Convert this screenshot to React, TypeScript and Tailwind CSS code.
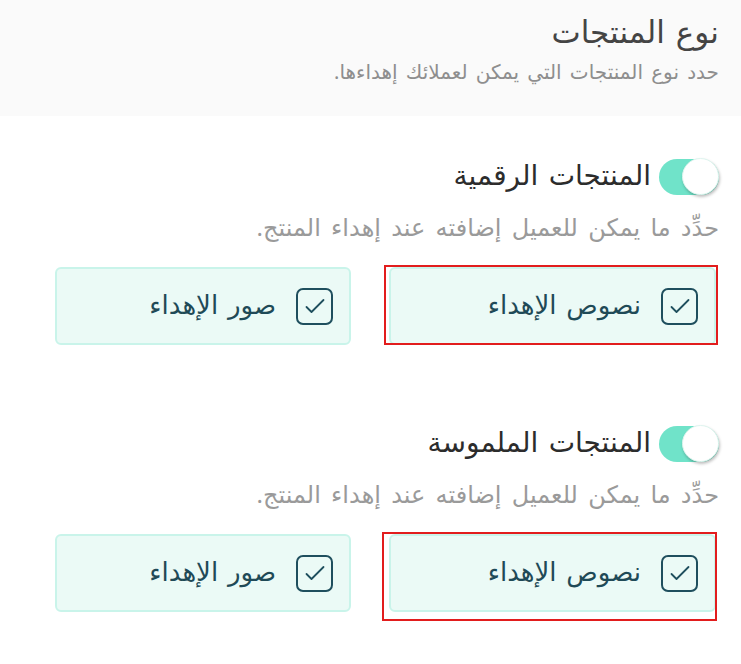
import React from 'react';

interface OptionProps {
  label: string;
  width: string;
  marked?: 'first' | 'second';
}

const CheckIcon = () => (
  <svg viewBox="0 0 24 24" className="w-[24px] h-[24px]" fill="none" stroke="currentColor" strokeWidth={1.8} strokeLinecap="round" strokeLinejoin="round">
    <path d="M3.5 13l5 5L20.5 6" />
  </svg>
);

const Option: React.FC<OptionProps> = ({ label, width, marked }) => (
  <div className={`relative ${width} h-[78px] rounded-md bg-[#ebfaf6] border-2 border-[#c9f4ea] flex items-center gap-[20px] pr-[16px]`}>
    <span className="w-[37px] h-[37px] rounded-[7px] border-2 border-[#1f4f5e] text-[#1f4f5e] flex items-center justify-center shrink-0">
      <CheckIcon />
    </span>
    <span className="text-[26px] leading-none pb-[5px] [word-spacing:3px] text-[#1f4a57]">{label}</span>

    {/* highlight frames */}
    {marked === 'first' && (
      <div className="absolute -top-[4px] -right-[4px] -bottom-[2px] -left-[7px] border-2 border-[#e21d1d] pointer-events-none"></div>
    )}
    {marked === 'second' && (
      <div className="absolute -top-[4px] -right-[3px] -bottom-[11px] -left-[9px] border-2 border-[#e21d1d] pointer-events-none"></div>
    )}
  </div>
);

const Section: React.FC<{ title: string; marked: 'first' | 'second' }> = ({ title, marked }) => (
  <section className="pr-[22px]">
    <div className="h-[37px] flex items-center gap-[8px]">
      <div className="w-[60px] h-[36px] rounded-full bg-[#70e3c9] flex items-center justify-start">
        <div className="w-[37px] h-[37px] rounded-full bg-white border border-[#dff5ef] shadow-[1px_2px_3px_rgba(0,0,0,0.25)]"></div>
      </div>
      <h3 className="text-[28px] text-[#2c2c2c] leading-none pb-[6px] [word-spacing:3px]">{title}</h3>
    </div>
    <p className="mt-[20px] text-[24px] text-[#9a9a9a] leading-[24px] [word-spacing:4px]">حدِّد ما يمكن للعميل إضافته عند إهداء المنتج.</p>
    <div className="mt-[28px] mr-[3px] flex gap-[38px]">
      <Option label="نصوص الإهداء" width="w-[327px]" marked={marked} />
      <Option label="صور الإهداء" width="w-[296px]" />
    </div>
  </section>
);

export default function App() {
  return (
    <div dir="rtl" className="w-[741px] h-[664px] bg-white overflow-hidden font-['Noto_Sans','DejaVu_Sans',sans-serif]">
      <header className="h-[116px] bg-[#fafafa] pr-[22px] pt-[13px]">
        <h2 className="text-[31px] text-[#444] leading-[36px] [word-spacing:3px]">نوع المنتجات</h2>
        <p className="mt-[11px] text-[20px] text-[#8e8e8e] leading-[24px] [word-spacing:3px]">حدد نوع المنتجات التي يمكن لعملائك إهداءها.</p>
      </header>

      <div className="pt-[42px] flex flex-col gap-[80px]">
        <Section title="المنتجات الرقمية" marked="first" />
        <Section title="المنتجات الملموسة" marked="second" />
      </div>
    </div>
  );
}
